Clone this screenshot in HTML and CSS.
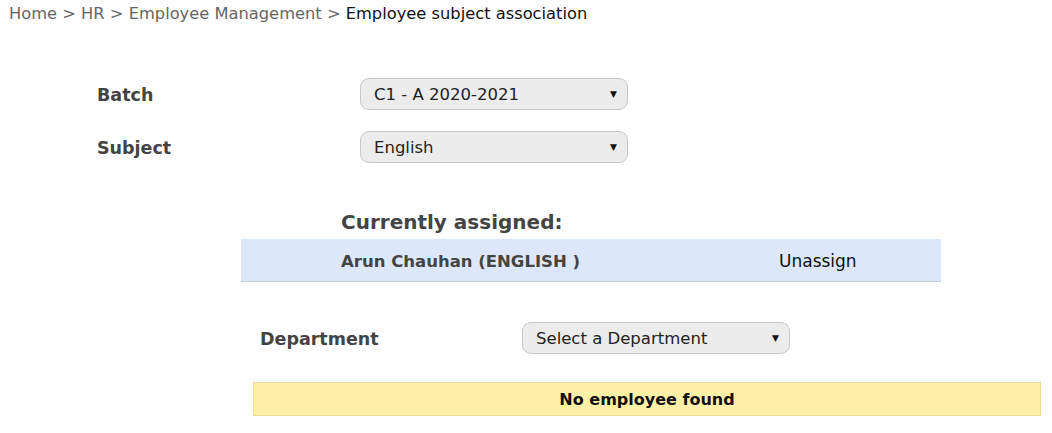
FILE: index.html
```html
<!DOCTYPE html>
<html>
<head>
<meta charset="utf-8">
<link rel="stylesheet" href="styles.css">
</head>
<body>
<div class="crumbs">
  <span class="crumb">Home</span> &gt; <span class="crumb">HR</span> &gt; <span class="crumb">Employee Management</span> &gt; <span class="current">Employee subject association</span>
</div>

<div class="filters">
  <div class="field">
    <label class="label">Batch</label>
    <div class="select"><span>C1 - A 2020-2021</span><span class="caret">&#9660;</span></div>
  </div>
  <div class="field">
    <label class="label">Subject</label>
    <div class="select"><span>English</span><span class="caret">&#9660;</span></div>
  </div>
</div>

<div class="assigned">
  <h3 class="assigned-title">Currently assigned:</h3>
  <div class="assigned-row">
    <span class="emp">Arun Chauhan (ENGLISH )</span>
    <span class="unassign">Unassign</span>
  </div>
</div>

<div class="dept">
  <label class="label">Department</label>
  <div class="select"><span>Select a Department</span><span class="caret">&#9660;</span></div>
</div>

<div class="notice">No employee found</div>
</body>
</html>
```
FILE: styles.css
```css
* { box-sizing: border-box; }
body {
  margin: 0;
  font-family: "DejaVu Sans", Verdana, sans-serif;
  color: #333;
  background: #fff;
  width: 1052px;
  height: 433px;
  overflow: hidden;
}
.crumbs {
  padding: 4px 0 0 9px;
  font-size: 16.3px;
  line-height: 20px;
  color: #666;
  white-space: nowrap;
}
.current { color: #111; }

.filters {
  margin-top: 54px;
  padding-left: 97px;
  display: flex;
  flex-direction: column;
  gap: 21px;
}
.field {
  display: flex;
  align-items: center;
}
.label {
  font-weight: bold;
  font-size: 17.5px;
  color: #444;
  padding-top: 2px;
}
.filters .label { width: 263px; }
.select {
  width: 268px;
  height: 32px;
  border: 1px solid #c8c8c8;
  border-radius: 9px;
  background: #ececec;
  display: flex;
  align-items: center;
  justify-content: space-between;
  padding: 0 10px 0 13px;
  font-size: 16.5px;
  color: #222;
}
.caret { font-size: 9px; color: #111; }

.assigned {
  margin: 45px 0 0 241px;
  width: 700px;
}
.assigned-title {
  margin: 0;
  padding-left: 100px;
  font-size: 20px;
  line-height: 28px;
  color: #444;
}
.assigned-row {
  margin-top: 3px;
  height: 43px;
  background: #dce8fa;
  border-bottom: 1px solid #c5ccd6;
  display: flex;
  align-items: center;
  padding-left: 100px;
  padding-top: 2px;
}
.emp {
  width: 438px;
  font-weight: bold;
  font-size: 16.5px;
  color: #444;
}
.unassign {
  font-size: 17px;
  color: #111;
}

.dept {
  margin: 40px 0 0 260px;
  display: flex;
  align-items: center;
}
.dept .label { width: 262px; }

.notice {
  margin: 28px 0 0 253px;
  width: 788px;
  height: 34px;
  background: #fff0a8;
  border: 1px solid #ecdc98;
  display: flex;
  align-items: center;
  justify-content: center;
  font-weight: bold;
  font-size: 16px;
  color: #111;
}
```
